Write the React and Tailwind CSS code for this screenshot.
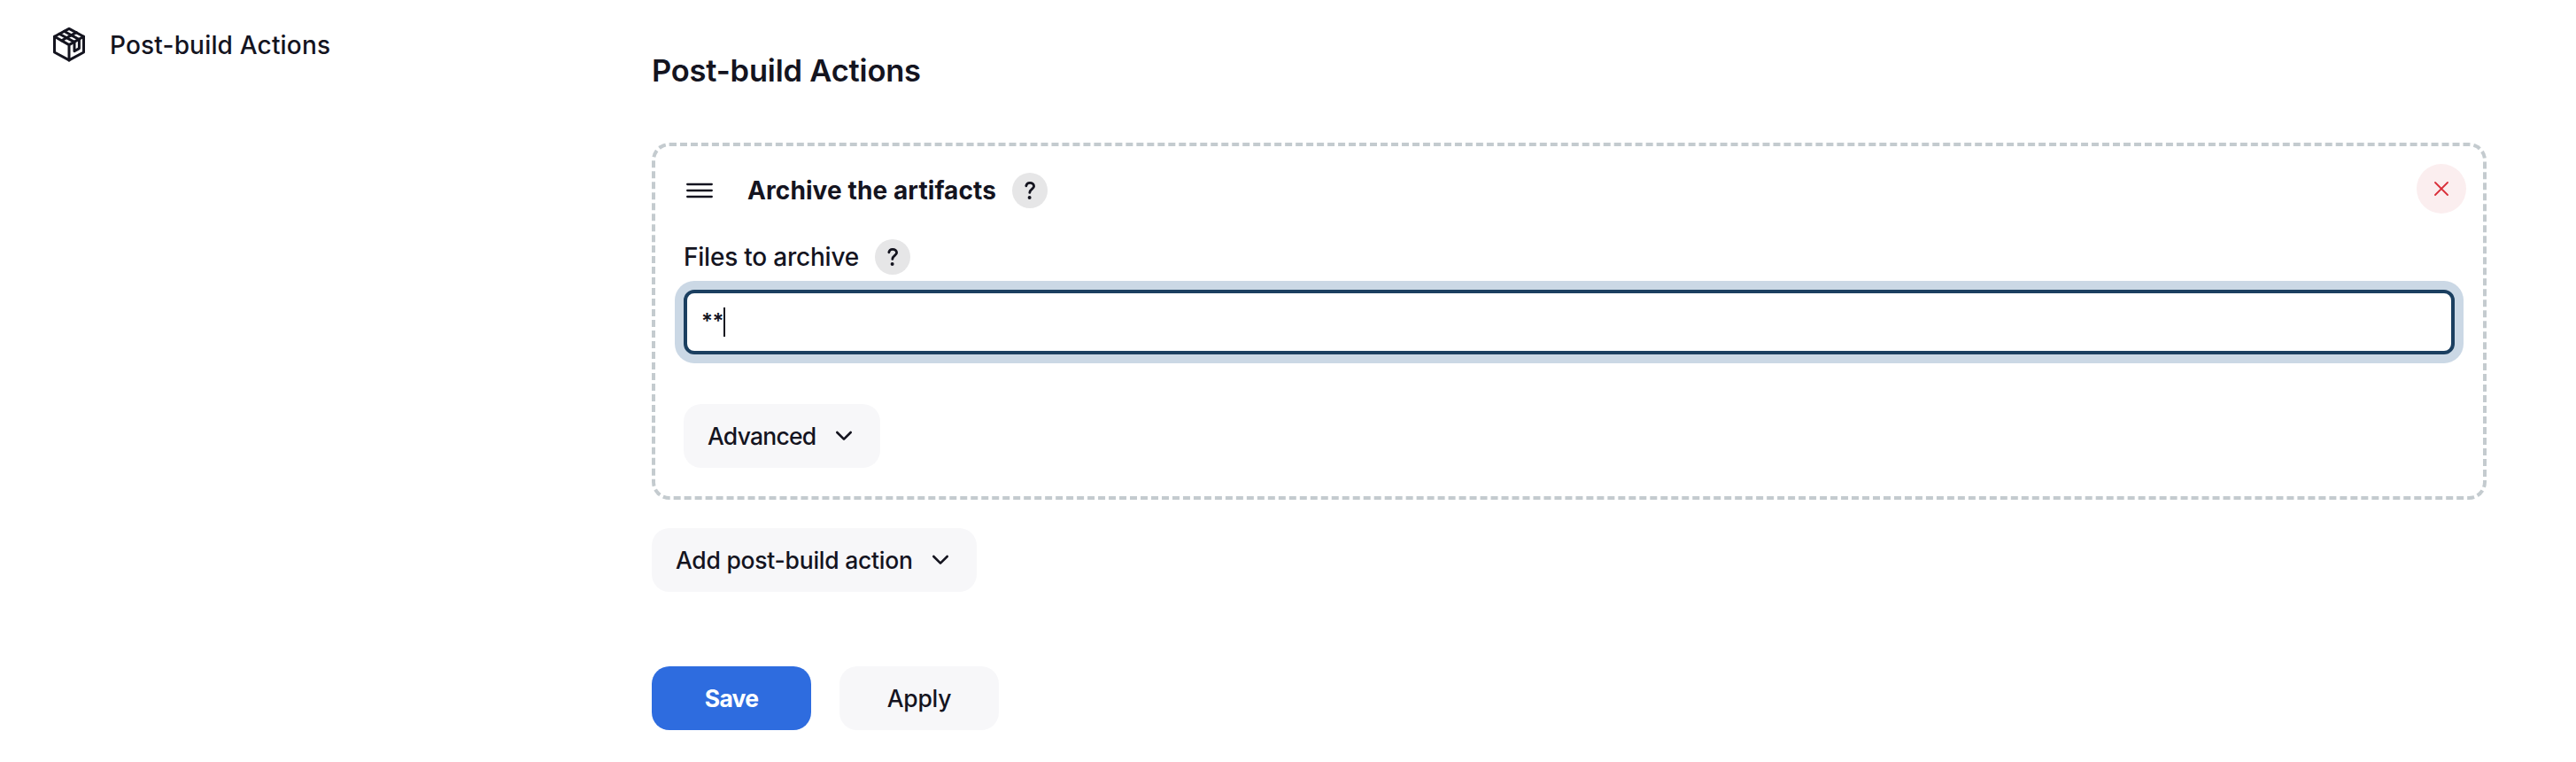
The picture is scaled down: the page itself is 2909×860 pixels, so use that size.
import React from "react";

function Help() {
  return (
    <button aria-label="Help" className="flex size-10 items-center justify-center rounded-full bg-[#e6e6e7]">
      <svg width="40" height="40" viewBox="0 0 40 40" fill="none" stroke="#14141f" strokeWidth="2.8" strokeLinecap="round" strokeLinejoin="round">
        <path d="M15.8 14.8C16.2 12.4 17.8 11.3 20 11.3C22.5 11.3 24.6 12.8 24.6 15.2C24.6 18.2 19.8 18.6 19.8 22.4" />
        <circle cx="19.6" cy="28" r="2" fill="#14141f" stroke="none" />
      </svg>
    </button>
  );
}

function Chevron() {
  return (
    <svg className="shrink-0" width="20" height="12" viewBox="0 0 20 12" fill="none" stroke="#14141f" strokeWidth="2.6" strokeLinecap="round" strokeLinejoin="round">
      <path d="M2.3 2L10 9.7L17.7 2" />
    </svg>
  );
}

function PackageIcon() {
  return (
    <svg className="shrink-0" width="40" height="44" viewBox="0 0 40 44" fill="none" stroke="#14141f" strokeWidth="3" strokeLinecap="round" strokeLinejoin="round">
      <path d="M20 4.4L36.5 13.2V31L20 39.9L3.5 31V13.2Z" />
      <path d="M3.5 13.2L20 22.6L36.5 13.2M20 22.6V39.9" />
      <path d="M14.5 7.2L31.4 16.6V26.6L26 29.8V19.4L9 10.2" />
      <path d="M11.6 17.8L28.2 8.6" />
    </svg>
  );
}

export default function App() {
  return (
    <div className="flex h-[860px] w-[2909px] overflow-hidden bg-white font-['Inter','Liberation_Sans',sans-serif] text-[#14141f]">
      <aside className="flex w-[736px] shrink-0 items-start pl-[58px] pt-7">
        <div className="flex h-11 items-center gap-[26px]">
          <PackageIcon />
          <span className="mt-0.5 whitespace-nowrap text-[28px] font-[480] tracking-[0.18px]">Post-build Actions</span>
        </div>
      </aside>
      <main className="w-[2072px]">
        <h2 className="mt-[58px] h-11 whitespace-nowrap text-[34.5px] leading-[44px] font-semibold tracking-[-0.2px]">Post-build Actions</h2>
        <section className="mt-[59px] h-[403px] rounded-[20px] border-4 border-dashed border-[#c4cbcf] px-8">
          <div className="flex h-[92px] items-start justify-between">
            <div className="flex items-center pt-[30px]">
              <svg className="ml-[3px]" width="30" height="20" viewBox="0 0 30 20" stroke="#14141f" strokeWidth="2.3" strokeLinecap="round">
                <path d="M1.2 3H28.8M1.2 10H28.8M1.2 17H28.8" />
              </svg>
              <h3 className="ml-[39px] mr-[18px] whitespace-nowrap text-[28px] leading-10 font-bold tracking-[0.1px]">Archive the artifacts</h3>
              <Help />
            </div>
            <button aria-label="Delete" className="-mr-[13px] mt-5 flex size-14 items-center justify-center rounded-full bg-[#fbeeef]">
              <svg width="16" height="16" viewBox="0 0 16 16" stroke="#d9303a" strokeWidth="1.8" strokeLinecap="round">
                <path d="M1 1L15 15M15 1L1 15" />
              </svg>
            </button>
          </div>
          <div className="mt-[13px] flex h-10 items-center">
            <label className="mr-[18px] whitespace-nowrap text-[28px] leading-10 font-[480] tracking-[-0.22px]">Files to archive</label>
            <Help />
          </div>
          <div className="mt-[17px] flex h-[73px] items-center rounded-xl border-4 border-[#1b3f60] bg-white pl-4 ring-[10px] ring-[#cbd8e5]">
            <span className="-mt-0.5 text-[24px] font-semibold tracking-[-0.5px]">**</span>
            <span className="h-[33px] w-0.5 bg-[#14141f]" />
          </div>
          <button className="mt-14 flex h-[72px] w-[222px] items-center justify-between rounded-[20px] bg-[#f7f7f9] pl-[27px] pr-[31px] text-[26.5px] font-medium">
            <span className="mt-px tracking-[-0.75px]">Advanced</span>
            <Chevron />
          </button>
        </section>
        <button className="mt-8 flex h-[72px] w-[367px] items-center justify-between whitespace-nowrap rounded-[20px] bg-[#f7f7f9] pl-[27px] pr-[31px] text-[26.5px] font-medium">
          <span className="mt-px tracking-[-0.25px]">Add post-build action</span>
          <Chevron />
        </button>
        <div className="mt-[84px] flex gap-8">
          <button className="h-[72px] w-[180px] rounded-[20px] bg-[#2e6cdf] pt-px text-[26.5px] font-bold tracking-[-0.8px] text-white">Save</button>
          <button className="h-[72px] w-[180px] rounded-[20px] bg-[#f7f7f9] pt-px text-[26.5px] font-medium tracking-[-0.2px]">Apply</button>
        </div>
      </main>
    </div>
  );
}
